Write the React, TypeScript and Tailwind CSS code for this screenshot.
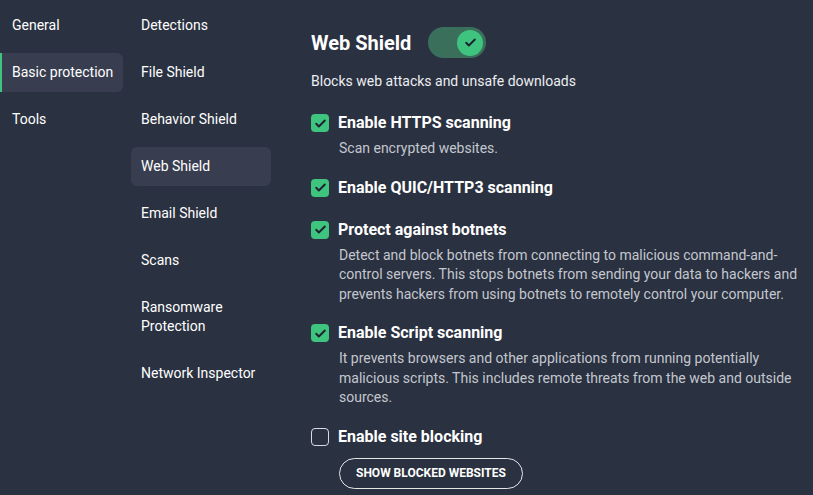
import React from 'react'

const FONT = { fontFamily: 'Roboto, "Noto Sans", sans-serif' }

const mainNav = ['General', 'Basic protection', 'Tools']
const subNav = [
  'Detections',
  'File Shield',
  'Behavior Shield',
  'Web Shield',
  'Email Shield',
  'Scans',
  'Ransomware Protection',
  'Network Inspector',
]

type Option = { label: string; desc?: string; checked: boolean }

const options: Option[] = [
  { label: 'Enable HTTPS scanning', desc: 'Scan encrypted websites.', checked: true },
  { label: 'Enable QUIC/HTTP3 scanning', checked: true },
  {
    label: 'Protect against botnets',
    desc: 'Detect and block botnets from connecting to malicious command-and-control servers. This stops botnets from sending your data to hackers and prevents hackers from using botnets to remotely control your computer.',
    checked: true,
  },
  {
    label: 'Enable Script scanning',
    desc: 'It prevents browsers and other applications from running potentially malicious scripts. This includes remote threats from the web and outside sources.',
    checked: true,
  },
  { label: 'Enable site blocking', checked: false },
]

const Check = ({ size = 12 }: { size?: number }) => (
  <svg width={size} height={size} viewBox="0 0 24 24" fill="none" stroke="#1c2230" strokeWidth={3.5} strokeLinecap="round" strokeLinejoin="round">
    <path d="M4 12.5l5 5L20 6.5" />
  </svg>
)

const Checkbox = ({ checked }: { checked: boolean }) =>
  checked ? (
    <div className="w-[18px] h-[18px] rounded-[4px] bg-[#3fc47f] flex items-center justify-center shrink-0">
      <Check size={13} />
    </div>
  ) : (
    <div className="w-[18px] h-[18px] rounded-[4px] border border-[#d9dbe0] shrink-0" />
  )

export default function App() {
  return (
    <div className="w-[813px] h-[495px] bg-[#2a3140] text-white flex overflow-hidden" style={FONT}>
      {/* main nav */}
      <div className="w-[123px] shrink-0 flex flex-col pt-[6px]">
        {mainNav.map((item) => {
          const active = item === 'Basic protection'
          return (
            <div
              key={item}
              className={
                active
                  ? 'relative h-[39px] mt-[8px] mb-[8px] flex items-center pl-[12px] text-[14px] bg-[#383e50] rounded-r-[6px]'
                  : 'h-[39px] flex items-center pl-[12px] text-[14px]'
              }
            >
              {active && <div className="absolute left-0 top-0 bottom-0 w-[2px] bg-[#3fc47f]" />}
              {item}
            </div>
          )
        })}
      </div>

      {/* sub nav */}
      <div className="w-[140px] shrink-0 ml-[8px] flex flex-col pt-[6px] gap-[8px]">
        {subNav.map((item) => {
          const active = item === 'Web Shield'
          const twoLine = item === 'Ransomware Protection'
          return (
            <div
              key={item}
              className={
                (twoLine ? 'h-[58px] pr-[30px] ' : 'h-[39px] pr-[2px] ') +
                'flex items-center pl-[10px] text-[14px] leading-[19px] rounded-[6px] ' +
                (active ? 'bg-[#383e50]' : '')
              }
            >
              {item}
            </div>
          )
        })}
      </div>

      {/* content */}
      <div className="flex-1 pl-[40px] pt-[27px]">
        <div className="flex items-center gap-[17px]">
          <h1 className="text-[20px] font-bold leading-[24px]">Web Shield</h1>
          <div className="w-[58px] h-[31px] rounded-full bg-[#3a6f5c] flex items-center justify-end pr-[3px]">
            <div className="w-[26px] h-[26px] rounded-full bg-[#3fc47f] flex items-center justify-center">
              <Check size={13} />
            </div>
          </div>
        </div>
        <p className="text-[14px] leading-[20px] mt-[13px] text-[#eceef2]">Blocks web attacks and unsafe downloads</p>

        <div className="mt-[22px] flex flex-col gap-[19px]">
          {options.map((o) => (
            <div key={o.label} className={o.desc ? '' : 'pb-[3px]'}>
              <div className="flex items-center gap-[9px] h-[20px]">
                <Checkbox checked={o.checked} />
                <span className="text-[16px] leading-[20px] font-bold">{o.label}</span>
              </div>
              {o.desc && (
                <p className="ml-[28px] mt-[6px] w-[462px] text-[14px] leading-[19.5px] text-[#c4c7cf]">{o.desc}</p>
              )}
            </div>
          ))}
        </div>

        <button className="ml-[28px] mt-[8px] h-[31px] px-[16px] rounded-full border border-[#e6e7ea] text-[12px] leading-[14px] font-bold uppercase">
          Show blocked websites
        </button>
      </div>
    </div>
  )
}
